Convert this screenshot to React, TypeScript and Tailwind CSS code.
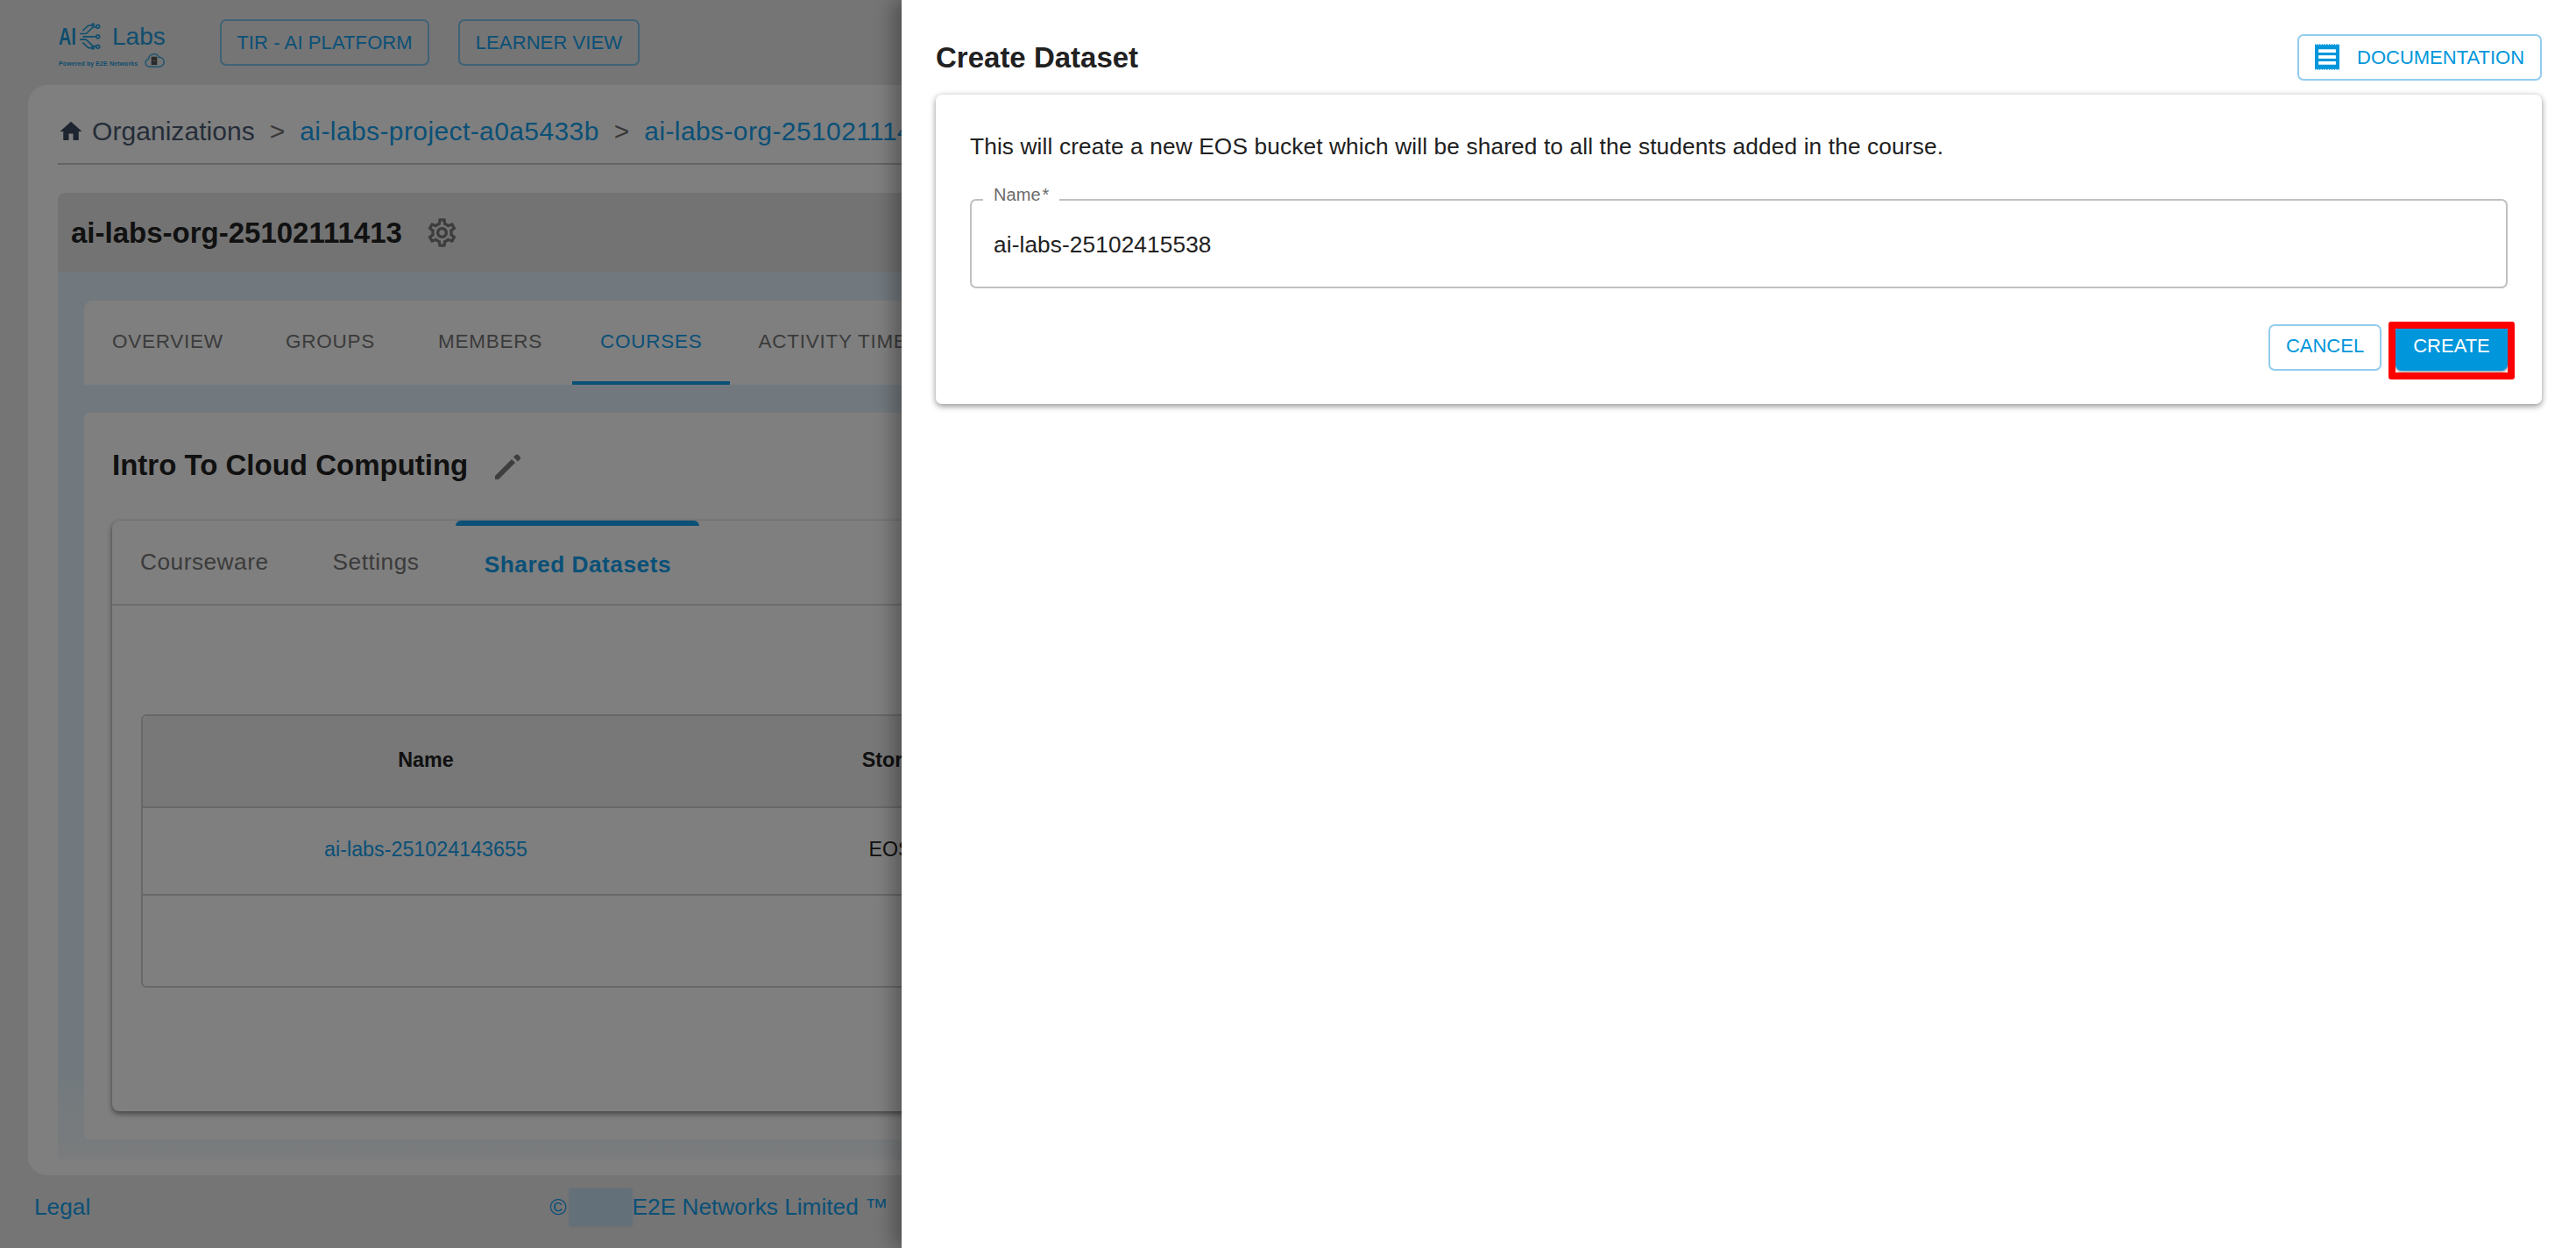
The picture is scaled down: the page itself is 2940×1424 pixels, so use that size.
import React from "react";

const FONT = "font-['Liberation_Sans',Arial,sans-serif]";

function MuiIcon({ d, className }: { d: string; className?: string }) {
  return (
    <svg viewBox="0 0 24 24" className={className} fill="currentColor">
      <path d={d} />
    </svg>
  );
}

const HOME = "M10 20v-6h4v6h5v-8h3L12 3 2 12h3v8z";
const GEAR =
  "M19.43 12.98c.04-.32.07-.64.07-.98 0-.34-.03-.66-.07-.98l2.11-1.65c.19-.15.24-.42.12-.64l-2-3.46c-.09-.16-.26-.25-.44-.25-.06 0-.12.01-.17.03l-2.49 1c-.52-.4-1.08-.73-1.69-.98l-.38-2.65C14.46 2.18 14.25 2 14 2h-4c-.25 0-.46.18-.49.42l-.38 2.65c-.61.25-1.17.59-1.69.98l-2.49-1c-.06-.02-.12-.03-.18-.03-.17 0-.34.09-.43.25l-2 3.46c-.13.22-.07.49.12.64l2.11 1.65c-.04.32-.07.65-.07.98 0 .33.03.66.07.98l-2.11 1.65c-.19.15-.24.42-.12.64l2 3.46c.09.16.26.25.44.25.06 0 .12-.01.17-.03l2.49-1c.52.4 1.08.73 1.69.98l.38 2.65c.03.24.24.42.49.42h4c.25 0 .46-.18.49-.42l.38-2.65c.61-.25 1.17-.59 1.69-.98l2.49 1c.06.02.12.03.18.03.17 0 .34-.09.43-.25l2-3.46c.12-.22.07-.49-.12-.64l-2.11-1.65zm-1.98-1.71c.04.31.05.52.05.73 0 .21-.02.43-.05.73l-.14 1.13.89.7 1.08.84-.7 1.21-1.27-.51-1.04-.42-.9.68c-.43.32-.84.56-1.25.73l-1.06.43-.16 1.13-.2 1.35h-1.4l-.19-1.35-.16-1.13-1.06-.43c-.43-.18-.83-.41-1.23-.71l-.91-.7-1.06.43-1.27.51-.7-1.21 1.08-.84.89-.7-.14-1.13c-.03-.31-.05-.54-.05-.74s.02-.43.05-.73l.14-1.13-.89-.7-1.08-.84.7-1.21 1.27.51 1.04.42.9-.68c.43-.32.84-.56 1.25-.73l1.06-.43.16-1.13.2-1.35h1.39l.19 1.35.16 1.13 1.06.43c.43.18.83.41 1.23.71l.91.7 1.06-.43 1.27-.51.7 1.21-1.07.85-.89.7.14 1.13zM12 8c-2.21 0-4 1.79-4 4s1.79 4 4 4 4-1.79 4-4-1.79-4-4-4zm0 6c-1.1 0-2-.9-2-2s.9-2 2-2 2 .9 2 2-.9 2-2 2z";

function PencilIcon() {
  return (
    <svg viewBox="0 0 30 30" className="ml-[30px] mt-[4px] h-[30px] w-[30px] text-[#7c7c7c]" fill="currentColor">
      <path d="M1 25 L20 6 L24 10 L5 29 H1 Z" />
      <path d="M22 3.500 L24.500 1 Q26 -0.200 27.500 1 L29.500 3 Q30.500 4.500 29.500 6 L27 8.500 Z" />
    </svg>
  );
}

function Logo() {
  return (
    <div className="mt-[26px] w-[121px] shrink-0 text-[#1f9bdc]">
      <div className="flex h-[31px] items-center">
        <span className="inline-block w-[19px] shrink-0 origin-left scale-x-[0.72] text-[28px] font-bold leading-none">AI</span>
        <svg viewBox="0 0 76 92" className="ml-[5px] h-[31px] w-[25px] shrink-0" fill="none" stroke="currentColor" strokeWidth="5">
          <path d="M10 47H54M0 37H22L46 14H57M0 57H22L46 80H57M10 27L30 8H44M10 67L30 86H44" />
          <circle cx="63" cy="47" r="6" />
          <circle cx="63" cy="12" r="6" />
          <circle cx="63" cy="82" r="6" />
          <circle cx="46" cy="6" r="4" />
          <circle cx="46" cy="86" r="4" />
        </svg>
        <span className="ml-[12px] shrink-0 text-[28px] leading-none">Labs</span>
      </div>
      <div className="mt-[3px] flex h-[17px] items-end justify-between">
        <span className="mb-[1px] whitespace-nowrap text-[7px] font-bold leading-none tracking-[0.1px]">Powered by E2E Networks</span>
        <svg viewBox="0 0 26 19" className="h-[17px] w-[24px] shrink-0" fill="none" stroke="currentColor" strokeWidth="1.4">
          <path d="M6.500 18a5 5 0 0 1-.8-9.800 7 7 0 0 1 13.300-2.200 6 6 0 0 1 1 12z" />
          <rect x="10" y="6" width="6" height="9" fill="#555" stroke="#555" />
          <path d="M11.500 10.500h3" stroke="#bbb" strokeWidth="1" />
        </svg>
      </div>
    </div>
  );
}

function HeaderButton({ children, w }: { children: string; w: string }) {
  return (
    <div className={`${w} flex h-[53px] items-center justify-center rounded-[7px] border-2 border-[#7fc4ec] text-[22px] tracking-[0.1px] text-[#14a0ee]`}>
      {children}
    </div>
  );
}

function Background() {
  const sep = <span className="mx-[17px] tracking-normal text-[#707070]">&gt;</span>;
  return (
    <div className="flex h-[1424px] w-[2940px] flex-col bg-[#ebebeb]">
      <header className="flex h-[97px] shrink-0 items-start pl-[67px]">
        <Logo />
        <div className="ml-[63px] mt-[22px] flex gap-[33px]">
          <HeaderButton w="w-[239px]">TIR - AI PLATFORM</HeaderButton>
          <HeaderButton w="w-[207px]">LEARNER VIEW</HeaderButton>
        </div>
      </header>

      <main className="mx-[32px] flex h-[1244px] shrink-0 flex-col rounded-[22px] bg-white px-[34px]">
        <div className="flex h-[91px] shrink-0 items-center border-b-2 border-[#c8c8c8] pt-[16px] text-[30px] leading-none">
          <MuiIcon d={HOME} className="mr-[9px] h-[30px] w-[30px] text-[#3b4a62]" />
          <span className="tracking-[0.05px] text-[#4b5a72]">Organizations</span>
          {sep}
          <span className="tracking-[0.4px] text-[#14a0ee]">ai-labs-project-a0a5433b</span>
          {sep}
          <span className="whitespace-nowrap tracking-[0.4px] text-[#14a0ee]">ai-labs-org-25102111413</span>
        </div>

        <div className="mt-[32px] flex h-[91px] shrink-0 items-center rounded-t-[8px] bg-[#e6e6e6] pl-[15px]">
          <span className="text-[33px] font-bold leading-none text-[#222222]">ai-labs-org-25102111413</span>
          <MuiIcon d={GEAR} className="ml-[26px] h-[39px] w-[39px] text-[#7a7a7a]" />
        </div>

        <div className="flex h-[1012px] shrink-0 flex-col bg-linear-to-b from-[#e4f3fc] from-90% to-[#f4f8fa] px-[30px] pt-[32px]">
          <div className="flex h-[96px] shrink-0 rounded-t-[10px] bg-white text-[22.5px] tracking-[0.75px] text-[#767676]">
            <div className="flex items-center px-[32px] pb-[2px]">OVERVIEW</div>
            <div className="ml-[7px] flex items-center px-[32px] pb-[2px]">GROUPS</div>
            <div className="ml-[8px] flex items-center px-[32px] pb-[2px]">MEMBERS</div>
            <div className="ml-[2px] flex items-center border-b-[4px] border-[#14a0ee] px-[32px] pt-[2px] text-[#14a0ee]">COURSES</div>
            <div className="flex items-center whitespace-nowrap px-[32px] pb-[2px]">ACTIVITY TIMELINE</div>
          </div>

          <div className="mt-[32px] flex h-[829px] shrink-0 flex-col rounded-[6px] bg-white px-[32px]">
            <div className="flex h-[123px] shrink-0 items-center pb-[4px]">
              <span className="text-[33px] font-bold leading-none text-[#222222]">Intro To Cloud Computing</span>
              <PencilIcon />
            </div>

            <div className="flex h-[674px] shrink-0 flex-col rounded-[8px] bg-white shadow-[0_3px_6px_rgba(0,0,0,0.45),0_0_3px_rgba(0,0,0,0.12)]">
              <div className="flex h-[97px] shrink-0 items-start border-b-2 border-[#d8d8d8] text-[26.25px] leading-none tracking-[0.5px]">
                <span className="ml-[32px] mt-[34px] text-[#767676]">Courseware</span>
                <span className="ml-[73px] mt-[34px] text-[#767676]">Settings</span>
                <div className="relative ml-[42px] flex h-full w-[278px] justify-center">
                  <div className="absolute left-0 right-0 top-0 h-[6px] rounded-t-[8px] bg-[#14a0ee]" />
                  <span className="mt-[37px] font-bold text-[#14a0ee]">Shared Datasets</span>
                </div>
              </div>

              <div className="mx-[33px] mt-[124px] flex h-[312px] flex-col rounded-[6px] border-2 border-[#d0d0d0] text-[23.3px]">
                <div className="grid h-[105px] shrink-0 grid-cols-[646px_436px_1fr] items-center rounded-t-[6px] border-b-2 border-[#d0d0d0] bg-[#f0f0f0] pb-[2px] text-center font-bold leading-none text-[#222222]">
                  <span>Name</span>
                  <span>Storage</span>
                  <span>Actions</span>
                </div>
                <div className="grid h-[100px] shrink-0 grid-cols-[646px_414px_1fr] items-center border-b-2 border-[#d0d0d0] pb-[2px] text-center leading-none">
                  <span className="text-[#14a0ee]">ai-labs-251024143655</span>
                  <span className="text-[#222222]">EOS</span>
                  <span />
                </div>
              </div>
            </div>
          </div>
        </div>
      </main>

      <footer className="relative flex flex-1 items-center pb-[10px] pl-[39px] text-[26.25px] leading-none text-[#14a0ee]">
        <span>Legal</span>
        <span className="ml-[524px]">©</span>
        <span className="ml-[2px] h-[44px] w-[73px] bg-[#c8e0f2] blur-[1px]" />
        <span className="whitespace-nowrap">E2E Networks Limited ™</span>
      </footer>
    </div>
  );
}

function DocIcon() {
  const top = Array.from({ length: 10 }, (_, i) => `L${i * 2.4 + 1.2} 1.2 L${(i + 1) * 2.4} 0`).join(" ");
  const bottom = Array.from({ length: 10 }, (_, i) => `L${24 - i * 2.4 - 1.2} 22.8 L${24 - (i + 1) * 2.4} 24`).join(" ");
  return (
    <svg viewBox="0 0 24 24" className="h-[30px] w-[28px] shrink-0" preserveAspectRatio="none">
      <path d={`M0 0 ${top} L24 24 ${bottom} Z`} fill="#0096db" />
      <rect x="3.500" y="5" width="17" height="3" fill="#fff" />
      <rect x="3.500" y="10.500" width="17" height="3" fill="#fff" />
      <rect x="3.500" y="16" width="17" height="3" fill="#fff" />
    </svg>
  );
}

function Drawer() {
  return (
    <aside className="absolute bottom-0 right-0 top-0 w-[1911px] bg-white pl-[39px] pr-[39px] pt-[39px] shadow-[-10px_0_20px_rgba(0,0,0,0.3)]">
      <div className="flex h-[52px] items-center justify-between">
        <h1 className="text-[33px] font-bold leading-none text-[#212121]">Create Dataset</h1>
        <div className="flex h-[53px] w-[279px] items-center rounded-[7px] border-2 border-[#92ccef] pl-[18px] text-[22px] text-[#0096db]">
          <DocIcon />
          <span className="ml-[20px]">DOCUMENTATION</span>
        </div>
      </div>

      <section className="mt-[17px] h-[353px] rounded-[7px] bg-white px-[39px] pt-[44px] shadow-[0_3px_7px_rgba(0,0,0,0.35),0_0_6px_rgba(0,0,0,0.12)]">
        <p className="text-[26.25px] leading-[30px] tracking-[0.13px] text-[#212121]">
          This will create a new EOS bucket which will be shared to all the students added in the course.
        </p>

        <div className="relative mt-[45px] flex h-[102px] items-center rounded-[7px] border-2 border-[#c0c0c0] pl-[25px] pt-[3px] text-[26.25px] tracking-[0.1px] text-[#212121]">
          <span className="absolute left-[13px] top-[-18px] bg-white px-[12px] text-[20px] leading-[22px] text-[#6a6a6a]">Name{"\u200a"}*</span>
          <span>ai-labs-25102415538</span>
        </div>

        <div className="mt-[41px] flex justify-end gap-[16px]">
          <div className="flex h-[53px] w-[129px] items-center justify-center rounded-[7px] border-2 border-[#92ccef] pb-[4px] text-[22px] text-[#0096db]">
            CANCEL
          </div>
          <div className="relative flex h-[53px] w-[128px] items-center justify-center rounded-[7px] bg-[#0096db] pb-[4px] text-[22px] text-white shadow-[0_2px_3px_rgba(0,0,0,0.35)]">
            CREATE
            <div className="absolute bottom-[-10px] left-[-8px] right-[-8px] top-[-3px] rounded-[3px] border-[8px] border-[#ff0000]" />
          </div>
        </div>
      </section>
    </aside>
  );
}

export default function App() {
  return (
    <div className={`relative h-[1424px] w-[2940px] overflow-hidden ${FONT}`}>
      <Background />
      <div className="absolute inset-0 bg-black/50" />
      <Drawer />
    </div>
  );
}
